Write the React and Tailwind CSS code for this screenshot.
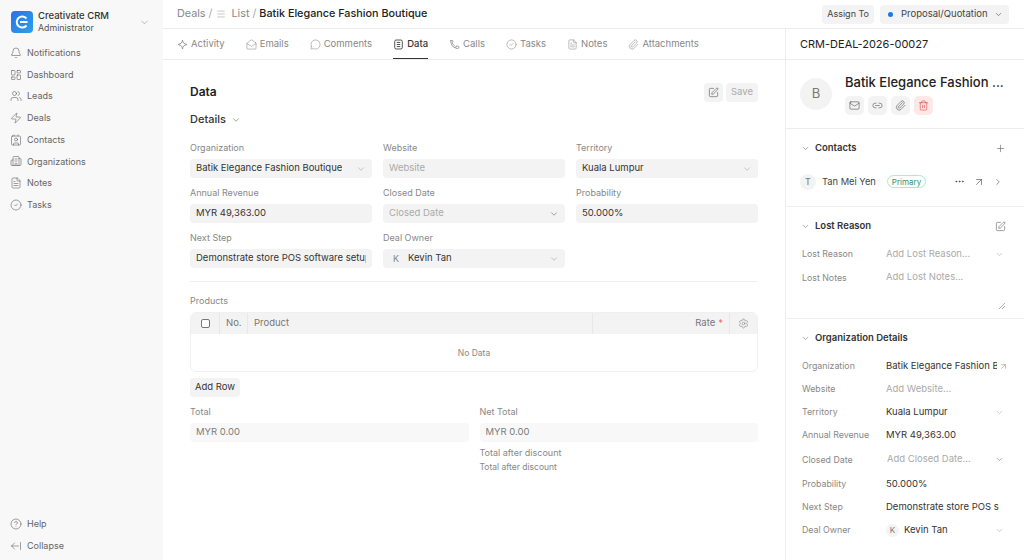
import {
  ArrowLeftFromLine, ArrowUpRight, Bell, Building2, ChevronDown, ChevronRight, CircleCheck, CircleHelp,
  Contact, Ellipsis, FileText, LayoutDashboard, Link2, Mail, MailOpen, Menu, MessageCircle, Paperclip,
  Plus, Settings, SquarePen, Trash2, Users, Zap,
} from 'lucide-react';

const nav = [
  ['Notifications', Bell],
  ['Dashboard', LayoutDashboard],
  ['Leads', Users],
  ['Deals', Zap],
  ['Contacts', Contact],
  ['Organizations', Building2],
  ['Notes', FileText],
  ['Tasks', CircleCheck],
];

const ActivityIcon = ({ size, ...props }) => (
  <svg width={size} height={size} viewBox="0 0 16 16" fill="none" stroke="currentColor" {...props}>
    <path d="M8 1.500c.4 3.600 2 5.600 6.500 6.500-4.500.9-6.100 2.900-6.500 6.500-.4-3.600-2-5.600-6.500-6.500C6 7.100 7.600 5.100 8 1.500Z" strokeLinejoin="round" />
  </svg>
);

const DataIcon = ({ size, ...props }) => (
  <svg width={size} height={size} viewBox="0 0 16 16" fill="none" stroke="currentColor" {...props}>
    <rect x="2.500" y="1.500" width="11" height="13" rx="2" />
    <path d="M5.500 5h5M5.500 8h5M5.500 11h5" />
  </svg>
);

const CallIcon = ({ size, ...props }) => (
  <svg width={size} height={size} viewBox="0 0 16 16" fill="none" stroke="currentColor" {...props}>
    <path d="M2.500 2.500 5 2l1 2.500-1.300 1.200c.7 1.700 1.700 3 3.300 4" strokeLinecap="round" strokeLinejoin="round" />
    <path d="M2.500 2.500c0 5 2.500 9.500 6.500 10.500" strokeLinecap="round" />
    <ellipse cx="12" cy="12" rx="2.500" ry="1.800" />
  </svg>
);

const tabs = [
  ['Activity', ActivityIcon],
  ['Emails', MailOpen],
  ['Comments', MessageCircle],
  ['Data', DataIcon],
  ['Calls', CallIcon],
  ['Tasks', CircleCheck],
  ['Notes', FileText],
  ['Attachments', Paperclip],
];

const Sidebar = () => (
  <aside className="w-[163px] shrink-0 h-full bg-[#f8f8f8] flex flex-col">
    <div className="pl-[11px] pr-[13px] pt-[11px] h-[42px]">
      <div className="flex items-center h-[22px]">
        <div className="w-[22px] h-[22px] rounded-[4px] bg-gradient-to-br from-[#2f6fe8] to-[#2fa0e6] flex items-center justify-center">
          <svg width="14" height="14" viewBox="0 0 14 14" fill="none" stroke="white" strokeWidth="2">
            <path d="M11.500 3.500A5.500 5.500 0 1 0 11.500 10.500M5 7h7.500" />
          </svg>
        </div>
        <div className="ml-[5px] flex-1 leading-[12px]">
          <div className="text-[9.500px] text-[#333] font-medium">Creativate CRM</div>
          <div className="text-[8.800px] text-[#555]">Administrator</div>
        </div>
        <ChevronDown size={11} className="text-[#888]" strokeWidth={1.2} />
      </div>
    </div>
    <nav className="pl-[10px]">
      {nav.map(([label, Icon]) => (
        <div key={label} className="h-[21.700px] flex items-center gap-[5px] text-[#666] text-[9px]">
          <Icon size={12} strokeWidth={1.100} className="text-[#555]" />
          {label}
        </div>
      ))}
    </nav>
    <div className="mt-auto pb-[3px] pl-[10px]">
      <div className="h-[22px] flex items-center gap-[5px] text-[#666] text-[9px]">
        <CircleHelp size={12} strokeWidth={1.100} className="text-[#555]" /> Help
      </div>
      <div className="h-[22px] flex items-center gap-[5px] text-[#666] text-[9px]">
        <ArrowLeftFromLine size={12} strokeWidth={1.100} className="text-[#555]" /> Collapse
      </div>
    </div>
  </aside>
);

const Header = () => (
  <header className="h-[29px] shrink-0 border-b border-[#ededed] flex items-center pl-[14px] pr-[15px]">
    <div className="flex items-center text-[10.800px] text-[#888]">
      Deals
      <span className="mx-[3px] text-[#aaa]">/</span>
      <Menu size={10} strokeWidth={1.100} className="ml-[1px] mr-[5px] text-[#888]" />
      List
      <span className="mx-[3px] text-[#aaa]">/</span>
      <span className="text-[#222] font-medium">Batik Elegance Fashion Boutique</span>
    </div>
    <div className="ml-auto flex items-center gap-[6px]">
      <div className="h-[19px] px-[5px] rounded-[4px] bg-[#f3f3f3] flex items-center text-[9px] text-[#444]">Assign To</div>
      <div className="h-[19px] w-[129px] pl-[8px] pr-[6px] rounded-[4px] bg-[#f3f3f3] flex items-center text-[9.500px] text-[#444]">
        <span className="w-[5px] h-[5px] rounded-full bg-[#1579e6] mr-[8px]" />
        Proposal/Quotation
        <ChevronDown size={9} strokeWidth={1.500} className="ml-auto" />
      </div>
    </div>
  </header>
);

const Tabs = () => (
  <div className="h-[31px] shrink-0 border-b border-[#ededed] flex items-stretch pl-[14px] gap-[21px]">
    {tabs.map(([label, Icon]) => {
      const active = label === 'Data';
      return (
        <div
          key={label}
          className={`flex items-center gap-[3px] pt-[1px] text-[9.500px] border-b ${active ? 'text-[#333] font-medium border-[#333]' : 'text-[#888] border-transparent'}`}
        >
          <Icon size={11} strokeWidth={1.200} className={active ? 'text-[#333]' : 'text-[#888]'} />
          {label}
        </div>
      );
    })}
  </div>
);

const Field = ({ label, value, placeholder, chevron, avatar, dim }) => (
  <div className="min-w-0">
    <div className="text-[9px] leading-[11px] text-[#888] mb-[6px]">{label}</div>
    <div className={`h-[19px] rounded-[4px] flex items-center pl-[6px] pr-[6px] text-[9.500px] overflow-hidden whitespace-nowrap ${dim ? 'bg-[#f8f8f8] text-[#7c7c7c]' : 'bg-[#f3f3f3] text-[#333]'}`}>
      {avatar && <span className="w-[10px] text-[#888] text-[9px] ml-[4px] mr-[5px]">{avatar}</span>}
      {placeholder ? <span className="text-[#aaa]">{placeholder}</span> : <span className="overflow-hidden">{value}</span>}
      {chevron && <ChevronDown size={10} strokeWidth={1.300} className={`ml-auto shrink-0 ${chevron === 'dark' ? 'text-[#555]' : 'text-[#999]'}`} />}
    </div>
  </div>
);

const DataTab = () => (
  <div className="px-[27px] pt-[23px]">
    <div className="flex items-center h-[19px]">
      <h2 className="text-[12px] font-semibold text-[#222] pb-[2px]">Data</h2>
      <div className="ml-auto flex gap-[3px]">
        <div className="w-[19px] h-[19px] rounded-[4px] bg-[#f3f3f3] flex items-center justify-center">
          <SquarePen size={11} strokeWidth={1.200} className="text-[#444]" />
        </div>
        <div className="w-[32px] h-[19px] rounded-[4px] bg-[#f3f3f3] flex items-center justify-center text-[9.500px] text-[#aaa]">Save</div>
      </div>
    </div>
    <div className="flex items-center gap-[5px] mt-[8px] h-[19px] text-[11px] font-medium text-[#333]">
      Details <ChevronDown size={10} strokeWidth={1.300} className="text-[#555]" />
    </div>
    <div className="grid grid-cols-3 gap-x-[11px] gap-y-[9px] mt-[13px]">
      <Field label="Organization" value="Batik Elegance Fashion Boutique" chevron="light" />
      <Field label="Website" placeholder="Website" />
      <Field label="Territory" value="Kuala Lumpur" chevron="light" />
      <Field label="Annual Revenue" value="MYR 49,363.00" />
      <Field label="Closed Date" placeholder="Closed Date" chevron="dark" />
      <Field label="Probability" value="50.000%" />
      <Field label="Next Step" value="Demonstrate store POS software setup" />
      <Field label="Deal Owner" value="Kevin Tan" avatar="K" chevron="light" />
    </div>
    <div className="border-t border-[#efefef] mt-[13px]" />
    <div className="text-[9px] leading-[11px] text-[#888] mt-[13px] mb-[6px]">Products</div>
    <div className="border border-[#f0f0f0] rounded-[6px] overflow-hidden h-[60px]">
      <div className="h-[21px] bg-[#f3f3f3] flex items-stretch text-[9.500px] text-[#777]">
        <div className="w-[29px] border-r border-[#e8e8e8] flex items-center justify-center">
          <span className="w-[9px] h-[9px] rounded-[2px] border border-[#777] bg-white" />
        </div>
        <div className="w-[28px] border-r border-[#e8e8e8] flex items-center pl-[6px]">No.</div>
        <div className="w-[345px] border-r border-[#e8e8e8] flex items-center pl-[6px]">Product</div>
        <div className="w-[137px] border-r border-[#e8e8e8] flex items-center justify-end pr-[6px]">
          Rate <span className="text-[#e57373] ml-[3px]">*</span>
        </div>
        <div className="flex-1 flex items-center justify-center">
          <Settings size={11} strokeWidth={1.100} className="text-[#777]" />
        </div>
      </div>
      <div className="h-[38px] flex items-center justify-center text-[8.500px] text-[#888]">No Data</div>
    </div>
    <div className="w-[50px] h-[19px] mt-[6px] rounded-[4px] bg-[#f3f3f3] flex items-center justify-center text-[9.500px] text-[#333]">Add Row</div>
    <div className="grid grid-cols-2 gap-x-[11px] mt-[9px]">
      <Field label="Total" value="MYR 0.00" dim />
      <div>
        <Field label="Net Total" value="MYR 0.00" dim />
        <div className="text-[9px] leading-[11px] text-[#888] mt-[5px]">Total after discount</div>
        <div className="text-[8.500px] leading-[11px] text-[#888] mt-[4px]">Total after discount</div>
      </div>
    </div>
  </div>
);

const SectionHead = ({ title, action }) => (
  <div className="flex items-center h-[19px] pl-[15px] pr-[18px] text-[9.500px] font-semibold text-[#333]">
    <ChevronDown size={9} strokeWidth={1.500} className="text-[#666] mr-[5px]" />
    {title}
    <div className="ml-auto">{action}</div>
  </div>
);

const Row = ({ label, h = 'h-[23px]', children }) => (
  <div className={`flex items-center ${h} pl-[16px] pr-[20px] text-[9.500px]`}>
    <div className="w-[84px] shrink-0 text-[8.800px] text-[#888]">{label}</div>
    <div className="flex-1 min-w-0 flex items-center text-[#333] whitespace-nowrap">{children}</div>
  </div>
);

const Placeholder = ({ children }) => <span className="text-[#aaa]">{children}</span>;
const Chev = ({ dark }) => <ChevronDown size={9} strokeWidth={1.300} className={`ml-auto shrink-0 ${dark ? 'text-[#555]' : 'text-[#999]'}`} />;

const IconBtn = ({ icon: Icon, red }) => (
  <div className={`w-[19px] h-[19px] rounded-[5px] flex items-center justify-center ${red ? 'bg-[#fde8e8] text-[#d8333a]' : 'bg-[#f3f3f3] text-[#444]'}`}>
    <Icon size={11} strokeWidth={1.200} />
  </div>
);

const RightPanel = () => (
  <aside className="w-[239px] shrink-0 h-full border-l border-[#ededed] flex flex-col">
    <div className="h-[31px] shrink-0 border-b border-[#ededed] flex items-center pl-[14px] text-[11px] text-[#222]">CRM-DEAL-2026-00027</div>
    <div className="h-[69px] shrink-0 border-b border-[#ededed] flex items-center pl-[14px]">
      <div className="w-[32px] h-[32px] rounded-full bg-[#f3f3f3] flex items-center justify-center text-[13px] text-[#777]">B</div>
      <div className="ml-[13px] -mt-[1px]">
        <div className="text-[13px] leading-[18px] font-medium text-[#222] whitespace-nowrap">Batik Elegance Fashion ...</div>
        <div className="flex gap-[4px] mt-[5px]">
          <IconBtn icon={Mail} />
          <IconBtn icon={Link2} />
          <IconBtn icon={Paperclip} />
          <IconBtn icon={Trash2} red />
        </div>
      </div>
    </div>

    <div className="h-[78px] shrink-0 border-b border-[#ededed] pt-[10px]">
      <SectionHead title="Contacts" action={<Plus size={11} strokeWidth={1.200} className="text-[#555]" />} />
      <div className="flex items-center mt-[14px] pl-[14px] pr-[21px] h-[19px] text-[9.300px] text-[#444]">
        <span className="w-[16px] h-[16px] rounded-full bg-[#f3f3f3] flex items-center justify-center text-[9px] text-[#777] mr-[6px]">T</span>
        Tan Mei Yen
        <span className="ml-[11px] h-[13px] px-[4px] rounded-full border border-[#b9e4c9] text-[#30946a] text-[8px] flex items-center">Primary</span>
        <Ellipsis size={11} strokeWidth={1.500} className="ml-auto text-[#333]" />
        <ArrowUpRight size={12} strokeWidth={1.200} className="ml-[8px] text-[#444]" />
        <ChevronRight size={10} strokeWidth={1.400} className="ml-[8px] text-[#444]" />
      </div>
    </div>

    <div className="h-[112px] shrink-0 border-b border-[#ededed] pt-[10px] flex flex-col">
      <SectionHead title="Lost Reason" action={<SquarePen size={11} strokeWidth={1.200} className="text-[#555]" />} />
      <div className="mt-[8px]">
        <Row label="Lost Reason" h="h-[20px]"><Placeholder>Add Lost Reason...</Placeholder><Chev /></Row>
        <div className="flex pl-[16px] pr-[20px] mt-[6px] text-[9.500px]">
          <div className="w-[84px] shrink-0 text-[8.800px] text-[#888] pt-[1px]">Lost Notes</div>
          <Placeholder>Add Lost Notes...</Placeholder>
        </div>
      </div>
      <div className="flex justify-end pr-[19px] mt-[18px]">
        <svg width="7" height="7" viewBox="0 0 7 7" stroke="#999" strokeWidth="0.800"><path d="M1 7 7 1M4 7l3-3" /></svg>
      </div>
    </div>

    <div className="pt-[10px]">
      <SectionHead title="Organization Details" />
      <div className="mt-[6.500px]">
        <Row label="Organization">
          <span className="overflow-hidden w-[115px]">Batik Elegance Fashion Boutique</span>
          <ArrowUpRight size={9} strokeWidth={1} className="ml-[2px] -mr-[4px] shrink-0 text-[#555]" />
        </Row>
        <Row label="Website"><Placeholder>Add Website...</Placeholder></Row>
        <Row label="Territory">Kuala Lumpur<Chev /></Row>
        <Row label="Annual Revenue">MYR 49,363.00</Row>
        <Row label="Closed Date" h="h-[26px]"><span className="ml-[1px]"><Placeholder>Add Closed Date...</Placeholder></span><Chev dark /></Row>
        <Row label="Probability">50.000%</Row>
        <Row label="Next Step"><span className="overflow-hidden w-[113px]">Demonstrate store POS software setup</span></Row>
        <Row label="Deal Owner">
          <span className="w-[13px] h-[13px] rounded-full bg-[#f3f3f3] flex items-center justify-center text-[8px] text-[#777] mr-[5px]">K</span>
          Kevin Tan<Chev />
        </Row>
      </div>
    </div>
  </aside>
);

export default function App() {
  return (
    <div className="w-[1024px] h-[560px] overflow-hidden flex bg-white font-['Inter',sans-serif]">
      <Sidebar />
      <div className="flex-1 min-w-0 flex flex-col">
        <Header />
        <div className="flex-1 min-h-0 flex">
          <main className="flex-1 min-w-0">
            <Tabs />
            <DataTab />
          </main>
          <RightPanel />
        </div>
      </div>
    </div>
  );
}
